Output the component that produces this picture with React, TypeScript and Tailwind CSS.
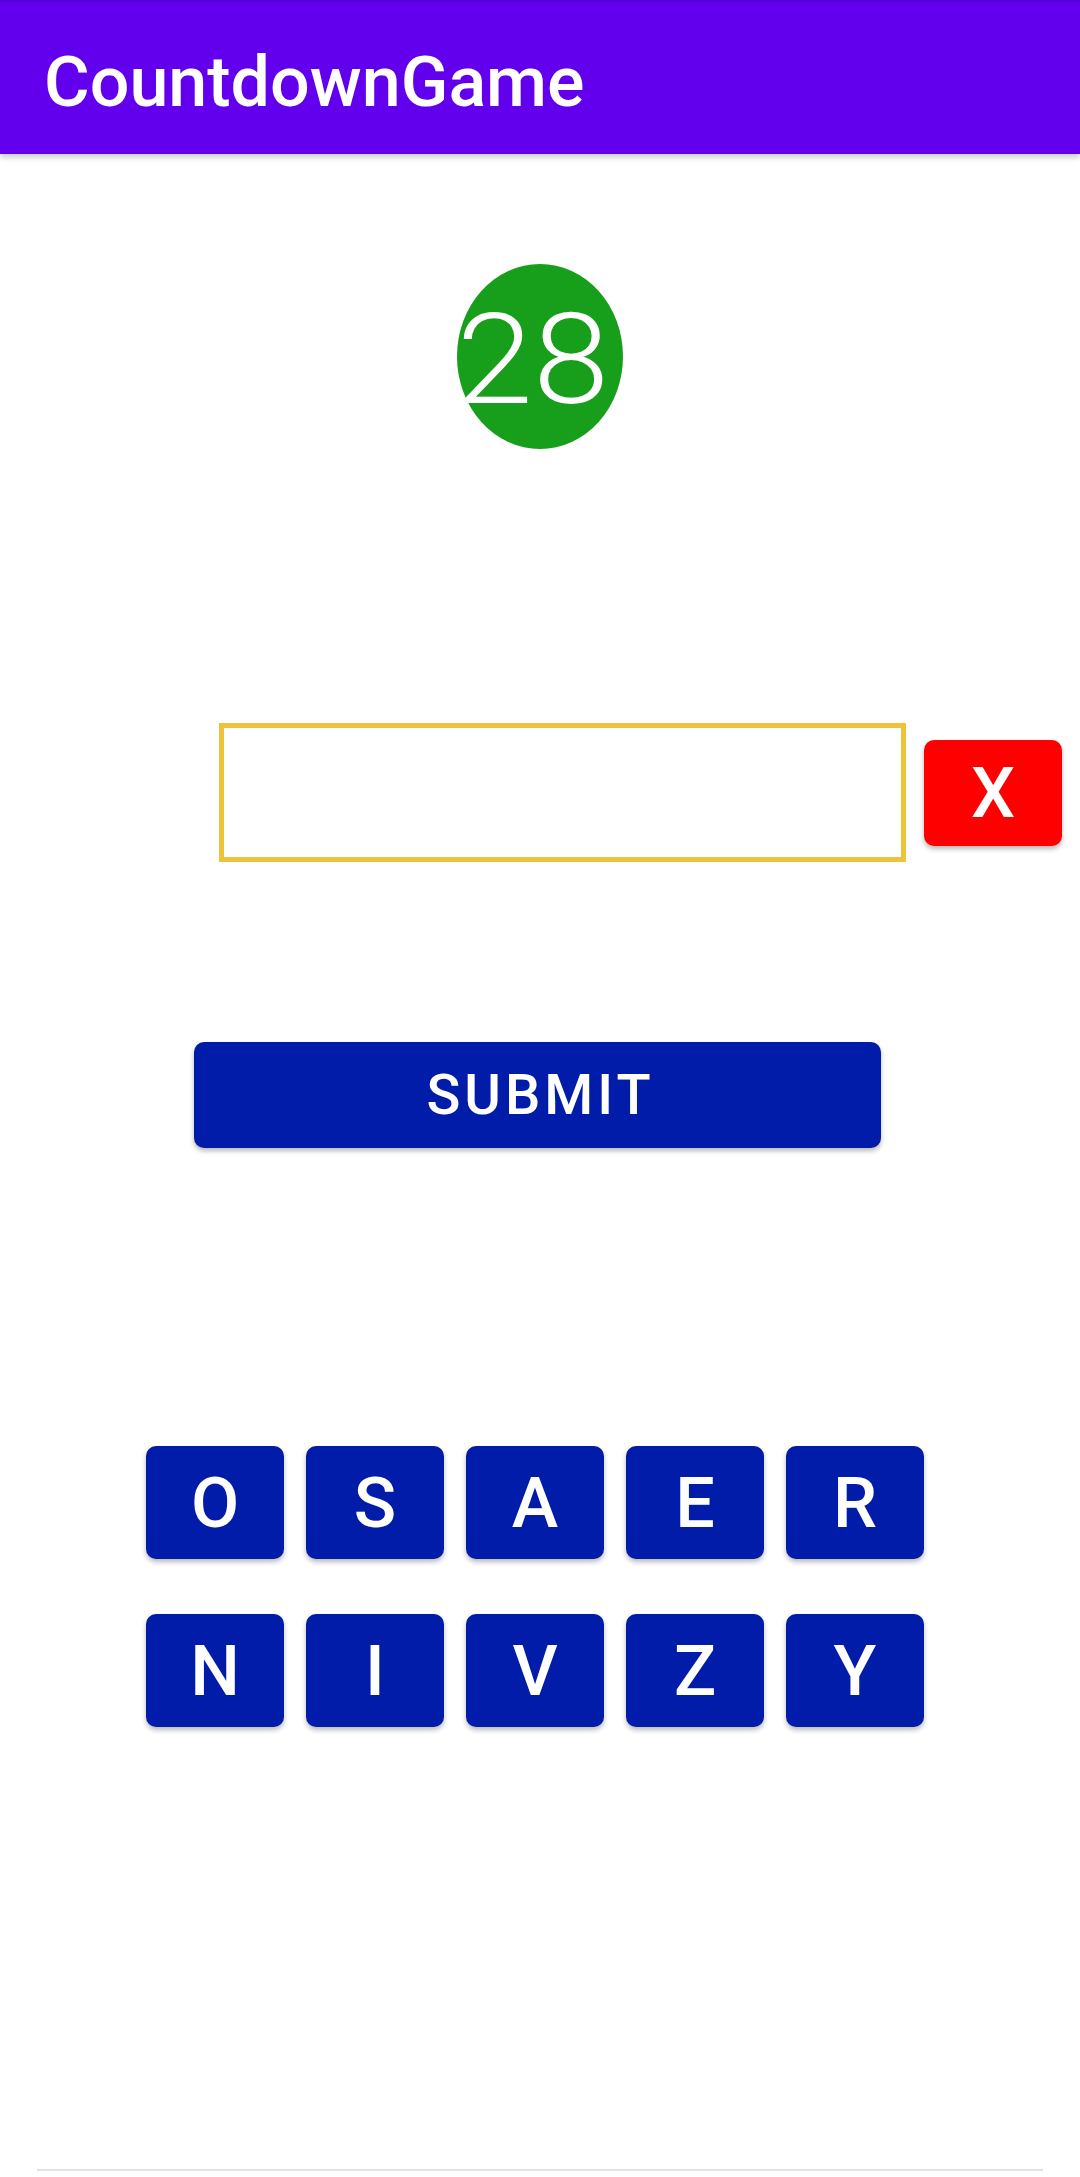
import React from "react";

const letters1 = ["O", "S", "A", "E", "R"];
const letters2 = ["N", "I", "V", "Z", "Y"];

function Tile({ ch }: { ch: string }) {
  return (
    <div className="w-[138px] h-[113px] rounded-[10px] bg-[#001ca8] shadow-[0_3px_5px_rgba(0,0,0,0.28)] flex items-center justify-center text-white text-[70px] leading-none font-medium">
      {ch}
    </div>
  );
}

export default function App() {
  return (
    <div
      className="w-[1080px] h-[2177px] bg-white flex flex-col relative overflow-hidden"
      style={{ fontFamily: "Roboto, 'Noto Sans', sans-serif" }}
    >
      <div className="h-[154px] bg-[#6200ee] shrink-0 border-t-2 border-[#5500d6] shadow-[0_3px_6px_rgba(0,0,0,0.22)] relative z-10">
        <div className="pl-[44px] pt-[45px] text-white text-[70px] leading-none font-medium">
          CountdownGame
        </div>
      </div>

      <div className="mt-[110px] flex justify-center">
        <div className="w-[166px] h-[185px] rounded-[50%] bg-[#179e1b] flex items-center justify-center">
          <span className="text-white text-[127px] leading-none font-light pr-[13px] pt-[6px] scale-x-[1.08]">28</span>
        </div>
      </div>

      <div className="mt-[274px] flex items-center pl-[219px]">
        <div className="w-[687px] h-[139px] border-[5px] border-[#efc23c] bg-white" />
        <div className="ml-[18px] w-[138px] h-[106px] rounded-[10px] bg-[#ff0000] shadow-[0_3px_5px_rgba(0,0,0,0.28)] flex items-center justify-center text-white text-[70px] leading-none font-medium">
          X
        </div>
      </div>

      <div className="mt-[180px] pl-[194px]">
        <div className="w-[687px] h-[106px] rounded-[10px] bg-[#001ca8] shadow-[0_3px_5px_rgba(0,0,0,0.28)] flex items-center justify-center text-white text-[56px] leading-none font-medium tracking-[4px] pl-[6px]">
          SUBMIT
        </div>
      </div>

      <div className="mt-[298px] pl-[146px] flex flex-col gap-[55px]">
        <div className="flex gap-[22px]">
          {letters1.map((c) => (
            <Tile key={c} ch={c} />
          ))}
        </div>
        <div className="flex gap-[22px]">
          {letters2.map((c) => (
            <Tile key={c} ch={c} />
          ))}
        </div>
      </div>

      <div className="mt-auto mb-[6px] mx-[37px] h-[2px] bg-[#e2e2e2]" />
    </div>
  );
}
